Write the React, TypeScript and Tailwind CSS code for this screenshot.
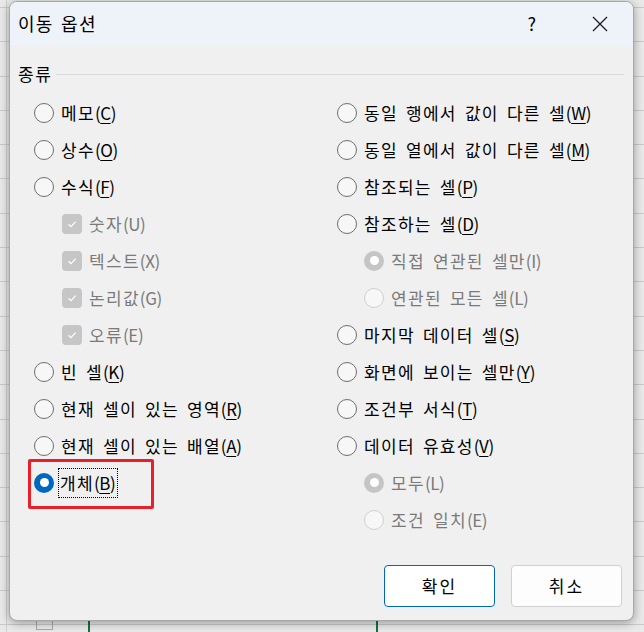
import React from "react"

type Item = {
  label: string
  key: string
  kind: "radio" | "check" | "subradio"
  disabled?: boolean
  checked?: boolean
}

const leftItems: Item[] = [
  { label: "메모", key: "C", kind: "radio" },
  { label: "상수", key: "O", kind: "radio" },
  { label: "수식", key: "F", kind: "radio" },
  { label: "숫자", key: "U", kind: "check", disabled: true, checked: true },
  { label: "텍스트", key: "X", kind: "check", disabled: true, checked: true },
  { label: "논리값", key: "G", kind: "check", disabled: true, checked: true },
  { label: "오류", key: "E", kind: "check", disabled: true, checked: true },
  { label: "빈 셀", key: "K", kind: "radio" },
  { label: "현재 셀이 있는 영역", key: "R", kind: "radio" },
  { label: "현재 셀이 있는 배열", key: "A", kind: "radio" },
  { label: "개체", key: "B", kind: "radio", checked: true },
]

const rightItems: Item[] = [
  { label: "동일 행에서 값이 다른 셀", key: "W", kind: "radio" },
  { label: "동일 열에서 값이 다른 셀", key: "M", kind: "radio" },
  { label: "참조되는 셀", key: "P", kind: "radio" },
  { label: "참조하는 셀", key: "D", kind: "radio" },
  { label: "직접 연관된 셀만", key: "I", kind: "subradio", disabled: true, checked: true },
  { label: "연관된 모든 셀", key: "L", kind: "subradio", disabled: true },
  { label: "마지막 데이터 셀", key: "S", kind: "radio" },
  { label: "화면에 보이는 셀만", key: "Y", kind: "radio" },
  { label: "조건부 서식", key: "T", kind: "radio" },
  { label: "데이터 유효성", key: "V", kind: "radio" },
  { label: "모두", key: "L", kind: "subradio", disabled: true, checked: true },
  { label: "조건 일치", key: "E", kind: "subradio", disabled: true },
]

function RadioDot ({ checked, disabled }: { checked?: boolean; disabled?: boolean }) {
  if (checked) {
    return (
      <span
        className={
          (disabled ? "bg-[#c5c5c5]" : "bg-[#0067c0]") +
          " w-[20px] h-[20px] rounded-full flex items-center justify-center shrink-0"
        }
      >
        <span className="w-[9px] h-[9px] rounded-full bg-white" />
      </span>
    )
  }
  return (
    <span
      className={
        disabled
          ? "w-[20px] h-[20px] rounded-full border border-[#cfcfcf] bg-[#f7f7f7] shrink-0"
          : "w-[20px] h-[20px] rounded-full border border-[#6e6e6e] bg-[#f7f7f7] shrink-0"
      }
    />
  )
}

function CheckBox () {
  return (
    <span className="w-[20px] h-[20px] rounded-[4px] bg-[#c6c6c6] flex items-center justify-center shrink-0">
      <svg width="12" height="12" viewBox="0 0 12 12">
        <path d="M2.5 6.3 L5 8.6 L9.6 3.6" fill="none" stroke="#ffffff" strokeWidth="1.2" />
      </svg>
    </span>
  )
}

function Row ({ item, focus }: { item: Item; focus?: boolean }) {
  const indent = item.kind === "radio" ? "pl-0" : item.kind === "check" ? "pl-[28px]" : "pl-[27px]"
  return (
    <div className={`h-[37px] flex items-center gap-[7px] ${indent}`}>
      {item.kind === "check" ? <CheckBox /> : <RadioDot checked={item.checked} disabled={item.disabled} />}
      <span
        className={
          (item.disabled ? "text-[#7a7a7a] " : "text-black ") +
          (focus ? "outline outline-1 outline-dotted outline-black -ml-[2px] pl-[1px] pr-[2px] leading-[28px]" : "")
        }
      >
        <span className="tracking-[1.3px] [word-spacing:3px]">{item.label}</span>
        <span className="tracking-[-0.4px]">
          (
          {item.disabled ? item.key : <span className="underline underline-offset-[3px]">{item.key}</span>})
        </span>
      </span>
    </div>
  )
}

export default function App () {
  return (
    <div
      className="relative w-[644px] h-[632px] overflow-hidden bg-[#e9e9e9] text-[17px]"
      style={{ fontFamily: '"Noto Sans CJK KR", "Noto Sans", sans-serif' }}
    >
      {/* sheet grid behind the dialog */}
      <div className="absolute inset-0 bg-[repeating-linear-gradient(to_bottom,transparent_0px,transparent_7px,#c9c9c9_7px,#c9c9c9_8px,transparent_8px,transparent_34.3px)]" />
      <div className="absolute left-[6px] top-0 w-px h-full bg-[#cfcfcf]" />
      <div className="absolute left-[88px] top-[618px] w-[2px] h-[14px] bg-[#1e6b41]" />
      <div className="absolute left-[376px] top-[618px] w-[2px] h-[14px] bg-[#1e6b41]" />
      <div className="absolute left-[36px] top-[618px] w-[17px] h-[12px] border border-[#a9a9a9]" />

      {/* dialog */}
      <div className="absolute left-[9px] top-[1px] w-[625px] h-[620px] rounded-[8px] border border-[#a8a8a8] bg-[#f0f0f0] shadow-[0_2px_10px_rgba(0,0,0,0.35)] flex flex-col overflow-hidden">
        <div className="h-[43px] bg-[#eef3fa] flex items-center pl-[8px] pr-[24px] shrink-0">
          <span className="text-[18px] text-black flex-1 tracking-[1.3px] [word-spacing:2px]">이동 옵션</span>
          <span className="text-[18px] text-black mr-[55px]">?</span>
          <svg width="18" height="18" viewBox="0 0 18 18">
            <path d="M2 2 L16 16 M16 2 L2 16" stroke="#1a1a1a" strokeWidth="1.3" />
          </svg>
        </div>

        <div className="flex-1 flex flex-col px-[8px]">
          <div className="flex items-center h-[30px] mt-[14px]">
            <span className="text-black tracking-[1.5px]">종류</span>
            <div className="flex-1 h-px bg-[#d8d8d8] ml-[4px] mr-[1px]" />
          </div>

          <div className="grid grid-cols-[303px_1fr] pl-[16px] mt-[5px]">
            <div className="flex flex-col">
              {leftItems.map((it, i) => (
                <Row key={i} item={it} focus={it.label === "개체"} />
              ))}
            </div>
            <div className="flex flex-col">
              {rightItems.map((it, i) => (
                <Row key={i} item={it} />
              ))}
            </div>
          </div>

          <div className="flex-1" />
          <div className="flex justify-end gap-[16px] pr-[3px] pb-[13px]">
            <button className="w-[111px] h-[42px] rounded-[4px] bg-white border border-[#0067c0] text-black text-[17px] tracking-[2px]">
              확인
            </button>
            <button className="w-[111px] h-[42px] rounded-[4px] bg-[#fdfdfd] border border-[#d0d0d0] text-black text-[17px] tracking-[2px]">
              취소
            </button>
          </div>
        </div>
      </div>

      {/* annotation */}
      <div className="absolute left-[28px] top-[459px] w-[126px] h-[50px] border-[3px] border-[#e8202a] rounded-[2px]" />
    </div>
  )
}
